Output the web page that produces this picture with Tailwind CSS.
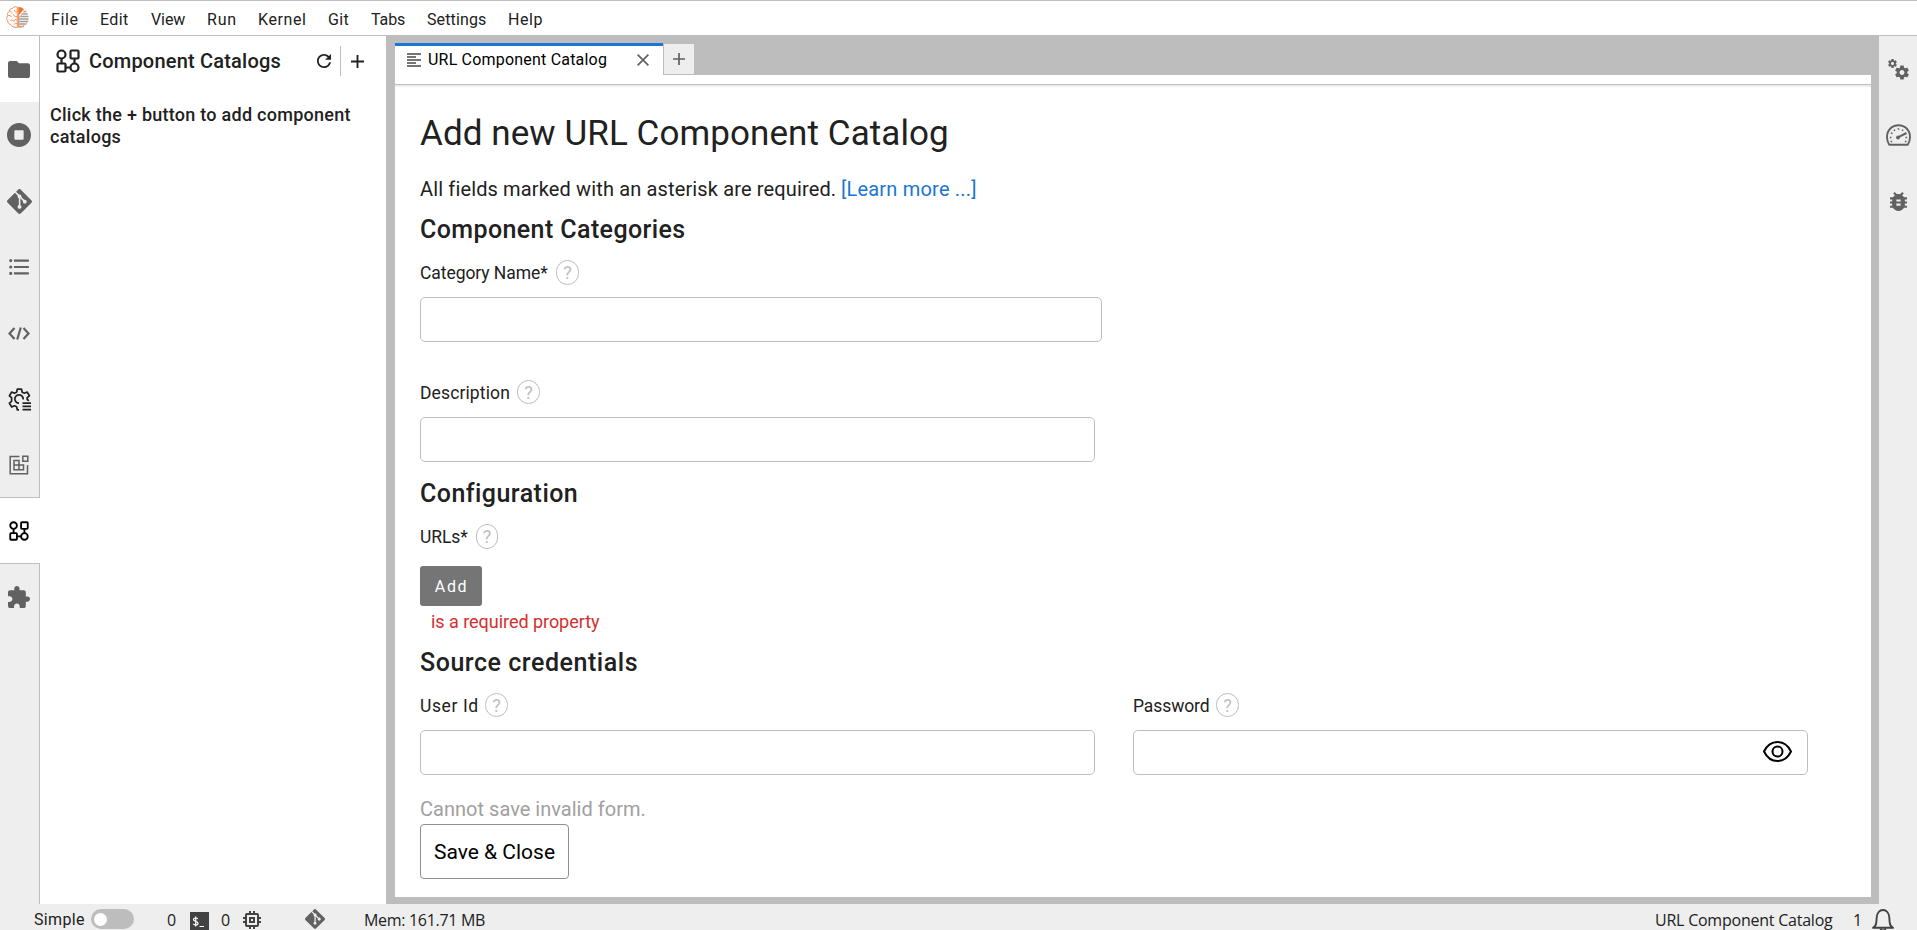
<!DOCTYPE html>
<html lang="en">
<head>
<meta charset="utf-8">
<title>URL Component Catalog</title>
<script src="https://cdn.jsdelivr.net/npm/@tailwindcss/browser@4"></script>
</head>
<body class="flex h-[930px] w-[1917px] flex-col overflow-hidden bg-[#eeeeee] font-['Roboto',sans-serif] text-[#212121]">

<svg class="hidden">
  <symbol id="catalog" viewBox="0 0 24 24"><g fill="none" stroke="currentColor" stroke-width="2.200"><circle cx="5.500" cy="5.500" r="4"/><rect x="14.500" y="1.500" width="8" height="8" rx="1"/><rect x="1.500" y="14.500" width="8" height="8" rx="1"/><circle cx="18.500" cy="18.500" r="4"/><path d="M5.500 9.500v5M9.500 18.500h5M18.500 9.500v5"/></g></symbol>
  <symbol id="git" viewBox="0 0 24 24"><path fill="currentColor" d="M23.546 10.93L13.067.452c-.604-.603-1.582-.603-2.188 0L8.708 2.627l2.76 2.76c.645-.215 1.379-.07 1.889.441.516.515.658 1.258.438 1.9l2.658 2.66c.645-.223 1.387-.078 1.9.435.721.72.721 1.884 0 2.604-.719.719-1.881.719-2.6 0-.539-.541-.674-1.337-.404-1.996L12.86 8.955v6.525c.176.086.342.203.488.348.713.721.713 1.883 0 2.6-.719.721-1.889.721-2.609 0-.719-.719-.719-1.879 0-2.598.182-.18.387-.316.605-.406V8.835c-.217-.091-.424-.222-.6-.401-.545-.545-.676-1.342-.396-2.009L7.636 3.7.45 10.881c-.6.605-.6 1.584 0 2.189l10.48 10.477c.604.604 1.582.604 2.186 0l10.43-10.43c.605-.603.605-1.582 0-2.187"/></symbol>
  <symbol id="plus" viewBox="5 5 14 14"><path fill="currentColor" d="M19 13h-6v6h-2v-6H5v-2h6V5h2v6h6v2z"/></symbol>
  <symbol id="cog" viewBox="2 2 20 20"><path fill="currentColor" d="M19.430 12.980c.04-.32.07-.64.07-.98s-.03-.66-.07-.98l2.110-1.650c.19-.15.24-.42.12-.64l-2-3.460c-.12-.22-.39-.3-.61-.22l-2.490 1c-.52-.4-1.080-.73-1.690-.98l-.38-2.650C14.460 2.180 14.250 2 14 2h-4c-.25 0-.46.18-.49.42l-.38 2.650c-.61.25-1.170.59-1.690.98l-2.490-1c-.23-.09-.49 0-.61.22l-2 3.460c-.13.22-.07.49.12.64l2.110 1.650c-.04.32-.07.65-.07.98s.03.66.07.98l-2.110 1.650c-.19.15-.24.42-.12.64l2 3.460c.12.22.39.3.61.22l2.490-1c.52.4 1.080.73 1.690.98l.38 2.650c.03.24.24.42.49.42h4c.25 0 .46-.18.49-.42l.38-2.650c.61-.25 1.170-.59 1.690-.98l2.490 1c.23.09.49 0 .61-.22l2-3.460c.12-.22.07-.49-.12-.64l-2.110-1.650zM12 15.500c-1.930 0-3.500-1.570-3.500-3.500s1.570-3.500 3.500-3.500 3.500 1.570 3.500 3.500-1.570 3.500-3.500 3.500z"/></symbol>
</svg>

<!-- Menu bar -->
<header class="flex h-9 shrink-0 items-start border-y border-[#bdbdbd] bg-white pl-[6px]">
  <svg class="mt-[5px] h-[23px] w-[24px]" viewBox="0 0 24 23" fill="none">
    <path d="M12.500 1v8.500L18 3.200C16.500 1.800 14.500 1 12.500 1z" fill="#f37726"/>
    <path d="M17.500 5.500h3M15.500 8h6.300M13.500 10.500h9M13 13h9.500M13 15.500h9M13 18h7.500M13 20.500h5" stroke="#9e9e9e" stroke-width="1.300"/>
    <path d="M12.500 12.500L20 4.500M12.500 21.500c4 0 8-3.500 9.500-7.500" stroke="#f7b083" stroke-width="1"/>
    <path d="M11.300 1C9 .3 7 1.300 6.500 2.500 4.500 2.200 3.200 3.600 3.400 5.300 1.500 6.200 1 8.300 1.800 9.800.2 11.300.4 13.600 1.800 14.600 1.600 17 3 18.300 4.700 18.300 5.500 20.600 8 21.800 11.300 21.300zM11 6c-2 .3-2.500-.7-2.500-2M3.400 5.300C5 5 6 6 5.700 7.500M1.800 9.800C3.500 9 5 9.700 5.500 11M11 10.500c-2.500.5-3.500-.6-3.200-2.200M4.200 14.500c1.300-.9 3-.4 3.500 1M11 14c-1.500-.7-3-.3-3.300 1.500M8 18.500c.5-1 1.700-1.300 3-.8M12.500 1v20.500" stroke="#f4935a" stroke-width="1"/>
  </svg>
  <nav class="flex pl-[21px] pt-[5px] text-base leading-[27px] whitespace-nowrap">
    <span class="w-[49px] tracking-[0.6px]">File</span>
    <span class="w-[51px] tracking-[0.38px]">Edit</span>
    <span class="w-[56px] tracking-[-0.1px]">View</span>
    <span class="w-[51px] tracking-[0.8px]">Run</span>
    <span class="w-[70px] tracking-[0.59px]">Kernel</span>
    <span class="w-[43px] tracking-[0.36px]">Git</span>
    <span class="w-[56px] tracking-[-0.1px]">Tabs</span>
    <span class="w-[81px] tracking-[0.12px]">Settings</span>
    <span class="tracking-[0.57px]">Help</span>
  </nav>
</header>

<div class="flex h-[868px] shrink-0">
  <!-- Left activity bar -->
  <aside class="flex w-10 shrink-0 flex-col text-[#616161]">
    <div class="flex h-[66px] items-center justify-center border-r border-[#bdbdbd] bg-white pr-px pt-px"><svg class="h-[17px] w-[22px]" viewBox="2 4 20 16" preserveAspectRatio="none"><path fill="currentColor" d="M10 4H4c-1.100 0-1.990.9-1.990 2L2 18c0 1.100.9 2 2 2h16c1.100 0 2-.9 2-2V8c0-1.100-.9-2-2-2h-8l-2-2z"/></svg></div>
    <div class="flex h-[66px] items-center justify-center border-r border-[#bdbdbd] pr-px"><svg class="h-6 w-6" viewBox="8 8 496 496"><path fill="currentColor" d="M256 8C119 8 8 119 8 256s111 248 248 248 248-111 248-248S393 8 256 8zm96 328c0 8.800-7.200 16-16 16H176c-8.800 0-16-7.200-16-16V176c0-8.800 7.200-16 16-16h160c8.800 0 16 7.200 16 16v160z"/></svg></div>
    <div class="flex h-[66px] items-center justify-center border-r border-[#bdbdbd] pr-px"><svg class="h-[25px] w-[25px]"><use href="#git"/></svg></div>
    <div class="flex h-[66px] items-center justify-center border-r border-[#bdbdbd] pr-px"><svg class="h-[16px] w-[20px]" viewBox="2.500 4.500 18.500 15"><path fill="currentColor" d="M7 5h14v2H7V5m0 8v-2h14v2H7M4 4.500A1.500 1.500 0 0 1 5.500 6 1.500 1.500 0 0 1 4 7.500 1.500 1.500 0 0 1 2.500 6 1.500 1.500 0 0 1 4 4.500m0 6A1.500 1.500 0 0 1 5.500 12 1.500 1.500 0 0 1 4 13.500 1.500 1.500 0 0 1 2.500 12 1.500 1.500 0 0 1 4 10.500M7 19v-2h14v2H7m-3-2.500A1.500 1.500 0 0 1 5.500 18 1.500 1.500 0 0 1 4 19.500 1.500 1.500 0 0 1 2.500 18 1.500 1.500 0 0 1 4 16.500z"/></svg></div>
    <div class="flex h-[66px] items-center justify-center border-r border-[#bdbdbd] pr-px"><svg class="h-[13px] w-[22px]" viewBox="0 0 22 13" fill="none" stroke="currentColor" stroke-width="2.200"><path d="M6.500 1L1.500 6.500l5 5.500M15.500 1l5 5.500-5 5.500M12.800.5L9.200 12.500"/></svg></div>
    <div class="flex h-[66px] items-center justify-center border-r border-[#bdbdbd] pr-px text-[#212121]"><svg class="h-[23px] w-[23px]" viewBox="0 0 23 23" fill="none" stroke="currentColor" stroke-width="1.700"><path d="M11 21.800H9.300l-.7-3-2.200-1-2.700 1.200L1.400 15.200l2.200-1.900V9.700L1.400 7.800l2.300-3.800 2.700 1.200 2.200-1 .7-3h4.200l.7 3 2.200 1 2.700-1.200 2.300 3.800-2.200 1.900v1.800l1.700 1.300" stroke-linejoin="round"/><path d="M11 15.200A4.200 4.200 0 1 1 15.200 11.500M14.500 15.200H23M14.500 18.400H23M14.500 21.600H23"/></svg></div>
    <div class="flex h-[65px] items-center justify-center border-r border-[#bdbdbd] pr-px pt-px"><svg class="h-5 w-5" viewBox="0 0 20 20" fill="none" stroke="currentColor" stroke-width="1.500"><path d="M10.500 1.500H1.200v17.300h17.300V10M5 5.500h5v9.200H5zM5 10h9.500v4.700H5M13.800 1.200h5v5h-5z"/></svg></div>
    <div class="flex h-[67px] items-center justify-center border-y border-[#bdbdbd] bg-white pr-[2px] text-black"><svg class="h-[20px] w-[20px]"><use href="#catalog"/></svg></div>
    <div class="flex flex-1 justify-center border-r border-[#bdbdbd] pr-px pt-[22px]"><svg class="h-[22px] w-[22px]" viewBox="2 1 21 21"><path fill="currentColor" d="M20.500 11H19V7c0-1.100-.9-2-2-2h-4V3.500C13 2.120 11.880 1 10.500 1S8 2.120 8 3.500V5H4c-1.100 0-1.990.9-1.990 2v3.800H3.500c1.490 0 2.700 1.210 2.700 2.700s-1.210 2.700-2.700 2.700H2V20c0 1.100.9 2 2 2h3.800v-1.500c0-1.490 1.210-2.700 2.700-2.700 1.490 0 2.700 1.210 2.700 2.700V22H17c1.100 0 2-.9 2-2v-4h1.500c1.380 0 2.500-1.120 2.500-2.500S21.880 11 20.500 11z"/></svg></div>
  </aside>

  <!-- Catalog panel -->
  <section class="w-[346px] shrink-0 bg-white pl-[10px]">
    <div class="flex h-[50px] items-center">
      <svg class="ml-[6px] h-[24px] w-[24px]"><use href="#catalog"/></svg>
      <h2 class="ml-[9px] w-[228px] text-xl font-medium tracking-[0.2px] whitespace-nowrap">Component Catalogs</h2>
      <svg class="h-[14px] w-[14px]" viewBox="3 3 12 12"><path fill="currentColor" d="M9 13.500c-2.490 0-4.500-2.010-4.500-4.500S6.510 4.500 9 4.500c1.240 0 2.360.52 3.170 1.330L10 8h5V3l-1.760 1.760C12.150 3.680 10.660 3 9 3 5.690 3 3.010 5.690 3.010 9S5.690 15 9 15c2.970 0 5.430-2.160 5.900-5h-1.520c-.46 2-2.240 3.500-4.380 3.500z"/></svg>
      <span class="ml-[9px] h-[30px] w-px bg-[#bdbdbd]"></span>
      <svg class="ml-[10px] h-[13px] w-[13px]"><use href="#plus"/></svg>
    </div>
    <p class="mt-[18px] text-lg font-medium leading-[22px] tracking-[0.26px]">Click the + button to add component<br>catalogs</p>
  </section>

  <!-- Document area -->
  <main class="flex w-[1493px] shrink-0 flex-col bg-[#bdbdbd] pb-[7px] pl-[9px] pr-2 pt-[7px]">
    <div class="flex h-8 shrink-0">
      <div class="flex h-8 w-[268px] items-center border-t-[3px] border-[#1976d2] bg-white pb-px pl-[12px] text-black">
        <svg class="h-[14px] w-[14px] text-[#757575]" viewBox="0 0 14 14" stroke="currentColor" stroke-width="1.900"><path d="M0 1h14M0 4h9M0 7h14M0 10h9M0 13h14"/></svg>
        <span class="ml-[7px] w-[209px] text-base leading-7 tracking-[0.2px] whitespace-nowrap">URL Component Catalog</span>
        <svg class="h-3 w-3 text-[#616161]" viewBox="0 0 12 12" stroke="currentColor" stroke-width="1.700"><path d="M.6.600l10.800 10.800M11.400.600L.6 11.400"/></svg>
      </div>
      <div class="mt-px flex h-[31px] w-[31px] items-center justify-center border-b border-l border-[#bdbdbd] bg-[#eeeeee] text-[#616161]"><svg class="h-3 w-3"><use href="#plus"/></svg></div>
    </div>
    <div class="h-[10px] shrink-0 border-b border-[#bdbdbd] bg-white"></div>
    <form class="flex-1 bg-white pl-[25px] pt-[25px] shadow-[inset_0_2px_1px_#eeeeee] whitespace-nowrap">
      <h1 class="text-[35px] leading-[48px] tracking-[0.08px]">Add new URL Component Catalog</h1>
      <p class="mt-[17px] flex text-xl leading-7"><span class="w-[421px] tracking-[0.14px]">All fields marked with an asterisk are required.</span><a class="tracking-[0.2px] text-[#1976d2]">[Learn more ...]</a></p>
      <h2 class="mt-[11px] text-[25px] font-medium leading-8 tracking-[0.4px]">Component Categories</h2>
      <div class="mt-[14px] flex h-[25px] items-start gap-2"><label class="w-[128px] text-[17.5px] leading-[26px] tracking-[-0.07px]">Category Name*</label><span class="flex h-[25px] w-[23px] items-center justify-center rounded-full border border-[#bdbdbd] text-[18px] text-[#bdbdbd]">?</span></div>
      <div class="mt-3 h-[45px] w-[682px] rounded-[5px] border border-[#bdbdbd]"></div>
      <div class="mt-[38px] flex h-[25px] items-start gap-2"><label class="w-[89px] text-[17.5px] leading-[26px] tracking-[0.12px]">Description</label><span class="flex h-6 w-[23px] items-center justify-center rounded-full border border-[#bdbdbd] text-[18px] text-[#bdbdbd]">?</span></div>
      <div class="mt-3 h-[45px] w-[675px] rounded-[5px] border border-[#bdbdbd]"></div>
      <h2 class="mt-[16px] text-[25px] font-medium leading-8 tracking-[0.45px]">Configuration</h2>
      <div class="mt-[14px] flex h-[25px] items-start gap-2"><label class="w-[48px] text-[17.5px] leading-[26px] tracking-[-0.1px]">URLs*</label><span class="flex h-[25px] w-[22px] items-center justify-center rounded-full border border-[#bdbdbd] text-[18px] text-[#bdbdbd]">?</span></div>
      <button type="button" class="mt-[17px] block h-10 w-[62px] rounded-[3px] bg-[#757575] pl-[1px] text-base leading-[42px] tracking-[1.6px] text-white">Add</button>
      <p class="mt-1 pl-[11px] text-lg leading-6 tracking-[-0.04px] text-[#d32f2f]">is a required property</p>
      <h2 class="mt-[13px] text-[25px] font-medium leading-8 tracking-[0.54px]">Source credentials</h2>
      <div class="mt-[14px] flex gap-[38px]">
        <div>
          <div class="flex h-[25px] items-start gap-2"><label class="w-[57px] text-[17.5px] leading-[26px] tracking-[0.6px]">User Id</label><span class="flex h-6 w-[23px] items-center justify-center rounded-full border border-[#bdbdbd] text-[18px] text-[#bdbdbd]">?</span></div>
          <div class="mt-3 h-[45px] w-[675px] rounded-[5px] border border-[#bdbdbd]"></div>
        </div>
        <div>
          <div class="flex h-[25px] items-start gap-2"><label class="w-[75px] text-[17.5px] leading-[26px] tracking-[-0.1px]">Password</label><span class="flex h-6 w-[23px] items-center justify-center rounded-full border border-[#bdbdbd] text-[18px] text-[#bdbdbd]">?</span></div>
          <div class="mt-3 flex h-[45px] w-[675px] items-center justify-end rounded-[5px] border border-[#bdbdbd] pr-[15px] text-black"><svg class="mb-[2px] h-[21px] w-[29px]" viewBox="0 0 29 21" fill="none" stroke="currentColor" stroke-width="2"><path d="M1 10.500C4 4.300 9 1 14.500 1S25 4.300 28 10.500C25 16.700 20 20 14.500 20S4 16.700 1 10.500z"/><circle cx="14.500" cy="10.500" r="5"/></svg></div>
        </div>
      </div>
      <p class="mt-5 text-xl leading-7 tracking-[0.02px] text-[#a0a0a0]">Cannot save invalid form.</p>
      <button type="button" class="mt-px block h-[55px] w-[149px] rounded-[4px] border border-[#8f8f8f] pt-[2px] text-[21px] text-black">Save &amp; Close</button>
    </form>
  </main>

  <!-- Right activity bar -->
  <aside class="flex w-[38px] shrink-0 flex-col text-[#616161]">
    <div class="flex h-[66px] items-center justify-center pl-[1px]">
      <div class="flex"><svg class="h-[9px] w-[9px]"><use href="#cog"/></svg><svg class="-ml-[2px] mt-[6px] h-[15px] w-[14px]"><use href="#cog"/></svg></div>
    </div>
    <div class="flex h-[66px] items-center justify-center pl-[1px]"><svg class="h-[22px] w-[25px]" viewBox="0 0 25 22" fill="none" stroke="currentColor" stroke-width="1.900"><path d="M3.200 20.700C1.700 18.500 1 16 1 13 1 6 6 1.200 12.500 1.200S24 6 24 13c0 3-.7 5.500-2.200 7.700z" stroke-linejoin="round"/><path d="M12.500 13.200L20.500 9" stroke-width="2"/><circle cx="12" cy="13.500" r="1.900" fill="currentColor" stroke="none"/><path d="M3.800 13.500h1.700M19.500 13.500h1.700M5 8.800l1.400.8M8 5.600l.9 1.300M12.500 4.200v1.600M17 5.600l-.9 1.300M4.500 17.500h1.700M18.800 17.500h1.700" stroke-width="1.600"/></svg></div>
    <div class="flex h-[66px] items-center justify-center pl-[1px]"><svg class="h-[19px] w-[17px]" viewBox="4 3 16 18" preserveAspectRatio="none"><path fill="currentColor" d="M20 8h-2.810c-.45-.78-1.070-1.450-1.820-1.960L17 4.410 15.590 3l-2.170 2.170C12.960 5.060 12.490 5 12 5c-.49 0-.96.06-1.410.17L8.410 3 7 4.410l1.620 1.630C7.880 6.550 7.260 7.220 6.810 8H4v2h2.090c-.05.33-.09.66-.09 1v1H4v2h2v1c0 .34.04.67.09 1H4v2h2.810c1.040 1.790 2.970 3 5.190 3s4.150-1.210 5.190-3H20v-2h-2.090c.05-.33.09-.66.09-1v-1h2v-2h-2v-1c0-.34-.04-.67-.09-1H20V8zm-6 8h-4v-2h4v2zm0-4h-4v-2h4v2z"/></svg></div>
  </aside>
</div>

<!-- Status bar -->
<footer class="flex h-[26px] shrink-0 items-start overflow-hidden pl-[34px] font-['Open_Sans',sans-serif] text-base leading-8 whitespace-nowrap">
  <span class="w-[57px] font-['Roboto',sans-serif] tracking-[0.34px]">Simple</span>
  <span class="mt-[5px] flex h-5 w-[43px] items-center rounded-full bg-[#bdbdbd] pl-[3px]"><i class="h-[13px] w-[13px] rounded-full bg-white"></i></span>
  <span class="ml-[33px] w-[23px]">0</span>
  <svg class="mt-2 h-[19px] w-[19px]" viewBox="0 0 19 19"><path fill="#424242" d="M0 0h19v19H0z"/><path d="M7.800 6.900C7.300 6.200 6.600 6 5.700 6 4.500 6 3.500 6.600 3.500 7.700c0 2.300 4.500 1 4.500 3.500 0 1.200-1 1.800-2.300 1.800-1 0-1.900-.4-2.400-1.100M5.700 4.500v10M9.500 14.500H14" stroke="#fff" stroke-width="1.200" fill="none"/></svg>
  <span class="ml-[12px] w-[22px]">0</span>
  <svg class="mt-[7px] h-[18px] w-[18px] text-[#424242]" viewBox="3 3 18 18"><path fill="currentColor" d="M15 9H9v6h6V9zm-2 4h-2v-2h2v2zm8-2V9h-2V7c0-1.100-.9-2-2-2h-2V3h-2v2h-2V3H9v2H7c-1.100 0-2 .9-2 2v2H3v2h2v2H3v2h2v2c0 1.100.9 2 2 2h2v2h2v-2h2v2h2v-2h2c1.100 0 2-.9 2-2v-2h2v-2h-2v-2h2zm-4 6H7V7h10v10z"/></svg>
  <svg class="ml-[44px] mt-[5px] h-5 w-5 text-[#616161]"><use href="#git"/></svg>
  <span class="ml-[39px] tracking-[-0.31px]">Mem: 161.71 MB</span>
  <span class="ml-auto w-[198px] tracking-[-0.23px]">URL Component Catalog</span>
  <span class="w-[19px]">1</span>
  <svg class="mr-[23px] mt-[5px] h-[22px] w-[22px] text-[#424242]" viewBox="0 0 22 22" fill="none" stroke="currentColor" stroke-width="1.900"><path d="M1 18.800c2-1 3-2 3.300-5.300l.4-5C5 4 7.500 1 11 1s6 3 6.300 7.500l.4 5c.3 3.300 1.300 4.300 3.300 5.300z" stroke-linejoin="round"/><path d="M8.500 19.500c.3 1.500 1.300 2 2.500 2s2.200-.5 2.500-2"/></svg>
</footer>
</body>
</html>
